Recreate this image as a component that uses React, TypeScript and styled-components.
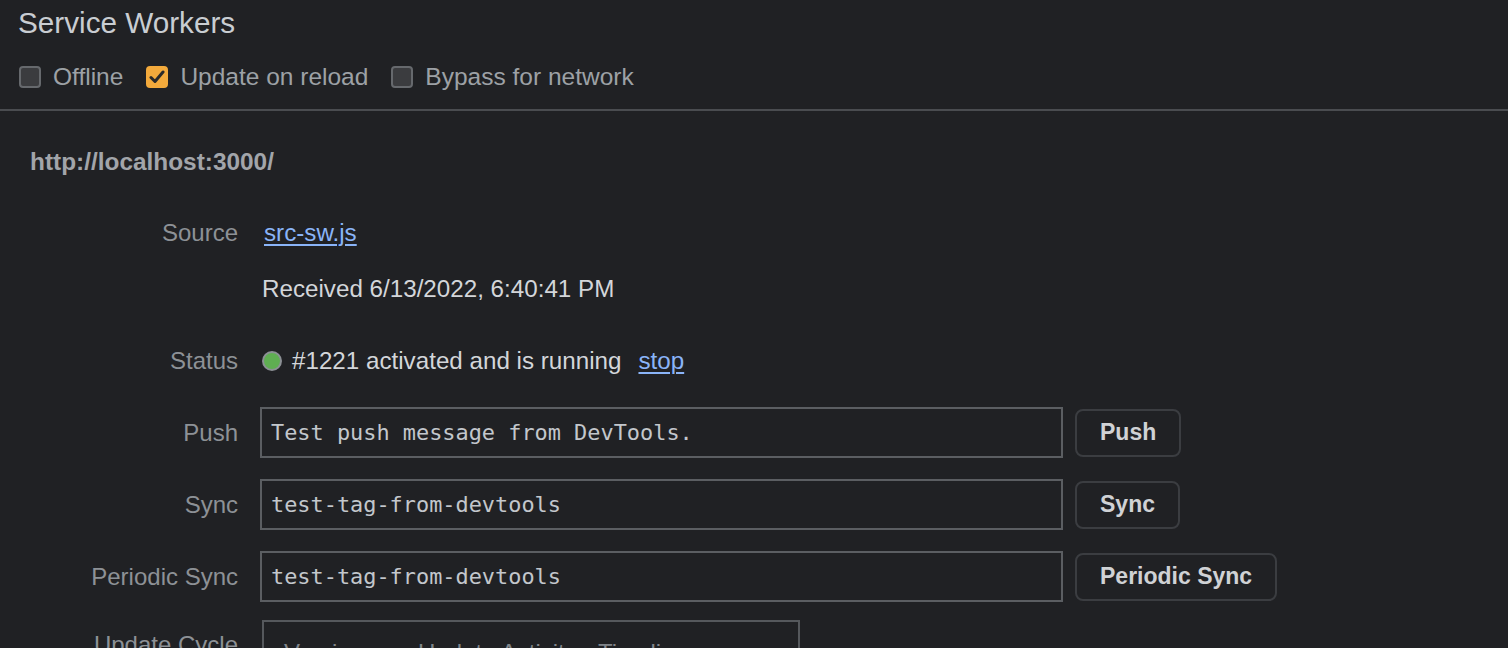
import React from "react";
import styled, { createGlobalStyle } from "styled-components";

const Global = createGlobalStyle`
  html, body { margin: 0; padding: 0; background: #202124; }
  body { font-family: "Liberation Sans", Arial, sans-serif; color: #d2d5d9; overflow: hidden; }
  * { box-sizing: border-box; }
`;

const Page = styled.div`
  width: 1508px;
  height: 648px;
  background: #202124;
  overflow: hidden;
`;

const Header = styled.div`
  padding: 5px 0 0 18px;
  height: 109px;
`;

const Title = styled.div`
  font-size: 29.7px;
  line-height: 36px;
  color: #c9cdd2;
`;

const Options = styled.div`
  display: flex;
  align-items: center;
  gap: 22px;
  margin-top: 20px;
`;

const Option = styled.label`
  display: flex;
  align-items: center;
  gap: 12px;
  font-size: 24.5px;
  line-height: 32px;
  color: #9da1a6;
`;

const Box = styled.span<{ $checked?: boolean }>`
  width: 22px;
  height: 22px;
  margin-left: 1px;
  border-radius: 4px;
  display: inline-flex;
  align-items: center;
  justify-content: center;
  background: ${(p) => (p.$checked ? "#f3aa3c" : "#3b3c3f")};
  border: 2px solid ${(p) => (p.$checked ? "#f3aa3c" : "#66696d")};
`;

const Divider = styled.div`
  height: 2px;
  background: #4a4c50;
`;

const Section = styled.div`
  padding: 37px 0 0 30px;
`;

const Host = styled.div`
  font-size: 24.4px;
  font-weight: 700;
  line-height: 28px;
  color: #a2a5aa;
`;

const Rows = styled.div`
  margin-top: 41px;
  display: flex;
  flex-direction: column;
`;

const Row = styled.div<{ $mt?: number; $h?: number }>`
  display: grid;
  grid-template-columns: 208px 1fr;
  column-gap: 24px;
  align-items: center;
  margin-top: ${(p) => p.$mt ?? 0}px;
  min-height: ${(p) => p.$h ?? 32}px;
`;

const Label = styled.div<{ $top?: boolean }>`
  text-align: right;
  font-size: 24px;
  line-height: 32px;
  color: #8d9196;
  align-self: ${(p) => (p.$top ? "start" : "center")};
  padding-top: ${(p) => (p.$top ? "9px" : "0")};
`;

const Value = styled.div`
  display: flex;
  align-items: center;
  font-size: 24.2px;
  line-height: 32px;
  color: #d3d6da;
`;

const Link = styled.a<{ $ml?: number }>`
  color: #8ab4f8;
  text-decoration: underline;
  text-underline-offset: 3px;
  text-decoration-thickness: 2px;
  cursor: pointer;
  margin-left: ${(p) => p.$ml ?? 2}px;
`;

const Dot = styled.span`
  width: 20px;
  height: 20px;
  border-radius: 50%;
  background: #5fae52;
  border: 2px solid #8c9095;
  margin-right: 10px;
`;

const Field = styled.div`
  width: 803px;
  height: 51px;
  margin-left: -2px;
  border: 2px solid #5b5e62;
  padding: 0 0 0 9px;
  display: flex;
  align-items: center;
  font-family: "DejaVu Sans Mono", "Liberation Mono", monospace;
  font-size: 21.9px;
  color: #c3c7cc;
  white-space: pre;
`;

const Button = styled.button`
  height: 48px;
  margin-left: 12px;
  padding: 0 23px;
  border: 2px solid #3b3d41;
  border-radius: 8px;
  background: #202124;
  color: #d0d2d5;
  font-family: "Liberation Sans", Arial, sans-serif;
  font-weight: 700;
  font-size: 23px;
  cursor: pointer;
`;

const Table = styled.div`
  width: 538px;
  height: 80px;
  border: 2px solid #55585c;
  display: flex;
  padding: 15px 0 0 20px;
  font-size: 24px;
  line-height: 32px;
  color: #80858a;
`;

const Col = styled.span<{ $w: number }>`
  width: ${(p) => p.$w}px;
`;

function Check() {
  return (
    <svg width="16" height="14" viewBox="0 0 16 14">
      <path d="M2 7.5 L6 11.5 L14 2" fill="none" stroke="#2a2a2a" strokeWidth="3" strokeLinecap="round" strokeLinejoin="round" />
    </svg>
  );
}

export default function App() {
  return (
    <Page>
      <Global />
      <Header>
        <Title>Service Workers</Title>
        <Options>
          <Option><Box />Offline</Option>
          <Option><Box $checked><Check /></Box>Update on reload</Option>
          <Option><Box />Bypass for network</Option>
        </Options>
      </Header>
      <Divider />
      <Section>
        <Host>http://localhost:3000/</Host>
        <Rows>
          <Row>
            <Label>Source</Label>
            <Value><Link>src-sw.js</Link></Value>
          </Row>
          <Row $mt={24}>
            <span />
            <Value>Received 6/13/2022, 6:40:41 PM</Value>
          </Row>
          <Row $mt={40}>
            <Label>Status</Label>
            <Value>
              <Dot />
              #1221 activated and is running
              <Link $ml={17}>stop</Link>
            </Value>
          </Row>
          <Row $mt={30} $h={51}>
            <Label>Push</Label>
            <Value>
              <Field>Test push message from DevTools.</Field>
              <Button>Push</Button>
            </Value>
          </Row>
          <Row $mt={21} $h={51}>
            <Label>Sync</Label>
            <Value>
              <Field>test-tag-from-devtools</Field>
              <Button>Sync</Button>
            </Value>
          </Row>
          <Row $mt={21} $h={51}>
            <Label>Periodic Sync</Label>
            <Value>
              <Field>test-tag-from-devtools</Field>
              <Button>Periodic Sync</Button>
            </Value>
          </Row>
          <Row $mt={18}>
            <Label $top>Update Cycle</Label>
            <Table>
              <Col $w={134}>Version</Col>
              <Col $w={180}>Update Activity</Col>
              <Col $w={150}>Timeline</Col>
            </Table>
          </Row>
        </Rows>
      </Section>
    </Page>
  );
}
